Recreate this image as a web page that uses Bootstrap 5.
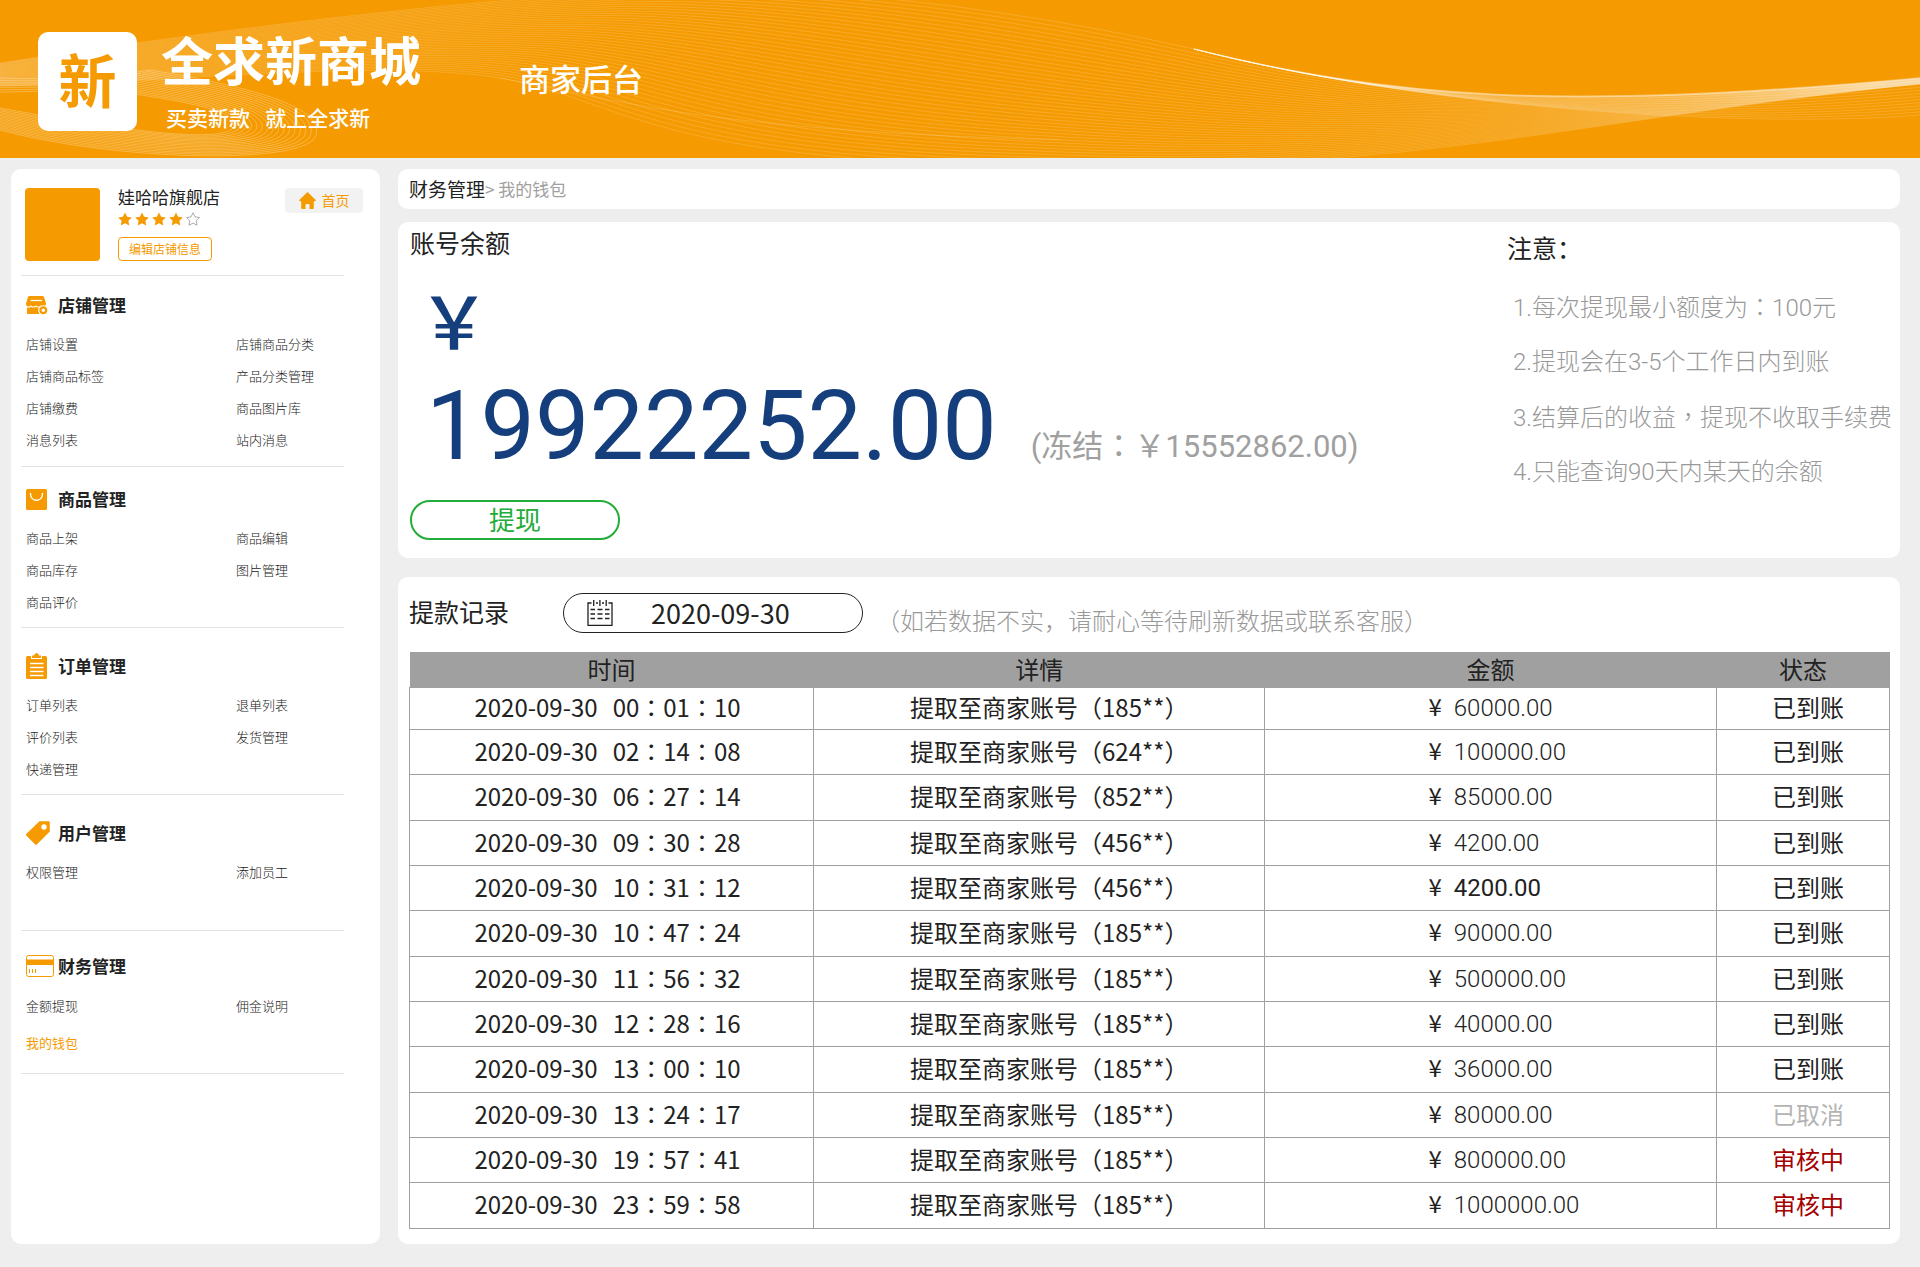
<!DOCTYPE html>
<html lang="zh-CN">
<head>
<meta charset="utf-8">
<meta name="viewport" content="width=device-width, initial-scale=1">
<title>全求新商城 商家后台</title>
<link rel="stylesheet" href="https://cdn.jsdelivr.net/npm/bootstrap@5.3.0/dist/css/bootstrap.min.css">
<style>
:root { --brand: #f59a00; --ink: #222; --soft: #a0a0a0; --navy: #153f7c; --ok: #22ac38; }
body { background: #eee; color: var(--ink); font-family: "Noto Sans CJK SC", sans-serif; }
a { color: inherit; text-decoration: none; }
.tc { font-family: "Noto Sans CJK TC", sans-serif; }
.num { font-family: Roboto, "Noto Sans CJK SC", sans-serif; }
.soft { color: var(--soft); }

.topbar { background: var(--brand); height: 158px; padding: 4px 0 0 38px; overflow: hidden; }
.waves { position: absolute; inset: 0; width: 100%; height: 100%; }
.waves path { fill: none; stroke: #fff; stroke-opacity: .16; }
.waves .loop { stroke-opacity: .28; }
.waves .glow { stroke: url(#fade); stroke-opacity: 1; stroke-width: 2; }
.logo { width: 99px; height: 99px; border-radius: 10px; font-size: 58px; line-height: 58px; color: var(--brand); padding-bottom: 6px; }
.brand-name { font-size: 52px; line-height: 72px; font-weight: 700; }
.slogan { font-size: 21px; line-height: 44px; padding-left: 5px; font-weight: 500; }
.portal { font-size: 31px; line-height: 40px; margin-left: 98px; padding-bottom: 6px; font-weight: 500; }

.page { padding: 11px 20px 23px 11px; gap: 18px; }
.panel { background: #fff; border-radius: 10px; }
.side { width: 369px; flex: none; padding-left: 10px; padding-right: 17px; }
.shop { padding: 19px 0 0 4px; height: 106px; }
.avatar { width: 75px; height: 73px; border-radius: 4px; background: var(--brand); margin-right: 18px; }
.shop-name { font-size: 17px; line-height: 18px; }
.stars { gap: 3px; margin: 6px 0 9px; }
.edit { border: 1px solid var(--brand); color: var(--brand); background: #fff; border-radius: 4px; height: 24px; width: 94px; font-size: 12px; line-height: 20px; padding: 0; }
.home { background: #f2f2f2; color: var(--brand); border-radius: 4px; width: 78px; height: 25px; font-size: 14px; gap: 6px; }
.menu { border-top: 1px solid #e2e2e2; width: 323px; padding: 25px 0 9px 5px; }
.menu-first { padding-top: 16px; padding-bottom: 10px; }
.menu-second { padding-top: 19px; }
.menu-roomy { padding-bottom: 42px; }
.menu-last { border-bottom: 1px solid #e2e2e2; padding-top: 22px; padding-bottom: 12px; }
.menu h2 { font-size: 17px; line-height: 26px; font-weight: 700; margin: 0 0 10px; }
.menu h2 span { width: 32px; height: 26px; flex: none; display: flex; align-items: center; }
.menu ul { display: grid; grid-template-columns: 210px 1fr; margin: 0; padding: 0; list-style: none; font-size: 13px; line-height: 32px; font-weight: 300; }
.menu-last ul { line-height: 37px; }
.menu-last h2 { margin-bottom: 8px; }
.current { color: var(--brand); font-weight: 400; }

.crumbs { height: 40px; padding-left: 11px; font-size: 19px; margin-bottom: 13px; }
.crumbs .soft { font-size: 17px; font-weight: 400; }
.balance { padding: 6px 0 18px 12px; margin-bottom: 19px; }
.title { font-size: 25px; line-height: 28px; font-weight: 400; margin: 0; }
.amount { color: var(--navy); }
.amount .yen { display: block; font-family: "Noto Sans CJK SC", sans-serif; font-weight: 500; font-size: 72px; line-height: 96px; padding: 14px 0 4px 8px; }
.amount .digits { display: block; font-size: 97px; line-height: 112px; padding-left: 16px; }
.frozen { font-size: 31px; line-height: 70px; margin-left: 34px; }
.cash { margin-top: 18px; width: 210px; height: 40px; border: 2px solid var(--ok); border-radius: 20px; background: #fff; color: var(--ok); font-size: 26px; line-height: 32px; padding: 0 0 2px; }
.notes { width: 393px; padding-top: 5px; flex: none; }
.notes ol { list-style: none; margin: 18px 0 0; padding-left: 6px; font-size: 24px; line-height: 54px; font-weight: 300; color: #999; white-space: nowrap; }

.records { padding: 16px 10px 15px 11px; }
.filter { margin-bottom: 19px; }
.filter .title { padding-bottom: 4px; }
.date-box { width: 300px; height: 40px; border: 1px solid var(--ink); border-radius: 20px; margin-left: 54px; padding-left: 23px; gap: 38px; }
.date-box input { border: 0; outline: 0; padding: 0; width: 180px; font-size: 27px; line-height: 36px; background: none; color: var(--ink); }
.hint { font-size: 24px; line-height: 24px; font-weight: 300; margin-left: 13px; padding-top: 14px; color: #999; }
.log { width: 100%; table-layout: fixed; border-collapse: collapse; font-size: 24px; line-height: 34px; text-align: center; }
.log th { background: #a0a0a0; height: 35px; padding: 0; font-weight: 400; }
.log td { border: 1px solid #a0a0a0; height: 45px; padding: 0 0 2px; }
.log tbody tr:first-child td { height: 42px; }
.log tbody tr:nth-child(3n) td { height: 46px; }
.c-time { width: 27.3%; } .c-info { width: 30.5%; } .c-sum { width: 30.5%; }
.log td:nth-child(1) { padding-right: 8px; }
.log td:nth-child(2) { padding-left: 20px; }
.log td:nth-child(3) { padding-left: 163px; text-align: left; }
.log td:nth-child(4) { padding-left: 10px; }
.clock { margin-left: 15px; }
.log .num { margin-left: 12px; font-weight: 300; }
.log .strong { font-weight: 400; }
.log .void { color: #b4b4b4; }
.log .wait { color: #a40000; }
</style>
</head>
<body>
<header class="topbar position-relative d-flex align-items-center text-white">
  <svg class="waves" id="waves" viewBox="0 0 1920 158" preserveAspectRatio="none" aria-hidden="true">
    <defs>
      <linearGradient id="fade" gradientUnits="userSpaceOnUse" x1="1194" x2="1920" y1="0" y2="0">
        <stop offset="0" stop-color="#fff" stop-opacity="0"/><stop offset=".2" stop-color="#fff" stop-opacity=".4"/><stop offset=".8" stop-color="#fff" stop-opacity=".4"/><stop offset="1" stop-color="#fff" stop-opacity=".2"/>
      </linearGradient>
    </defs>
  </svg>
  <div class="logo position-relative bg-white fw-bold d-flex align-items-center justify-content-center">新</div>
  <div class="position-relative ms-4">
    <div class="brand-name">全求新商城</div>
    <div class="slogan">买卖新款&ensp; 就上全求新</div>
  </div>
  <div class="portal position-relative">商家后台</div>
</header>

<div class="page d-flex">
  <aside class="side panel">
    <div class="shop d-flex align-items-start">
      <div class="avatar"></div>
      <div>
        <div class="shop-name">娃哈哈旗舰店</div>
        <div class="stars d-flex" role="img" aria-label="4 / 5">
          <svg width="14" height="14" viewBox="0 0 14 14"><path fill="#f59a00" d="M7 .4l2.1 4.3 4.7.7-3.4 3.3.8 4.7L7 11.200l-4.200 2.200.8-4.700L.2 5.400l4.700-.7z"/></svg>
          <svg width="14" height="14" viewBox="0 0 14 14"><path fill="#f59a00" d="M7 .4l2.1 4.3 4.7.7-3.4 3.3.8 4.7L7 11.200l-4.200 2.200.8-4.700L.2 5.400l4.700-.7z"/></svg>
          <svg width="14" height="14" viewBox="0 0 14 14"><path fill="#f59a00" d="M7 .4l2.1 4.3 4.7.7-3.4 3.3.8 4.7L7 11.200l-4.200 2.200.8-4.700L.2 5.400l4.700-.7z"/></svg>
          <svg width="14" height="14" viewBox="0 0 14 14"><path fill="#f59a00" d="M7 .4l2.1 4.3 4.7.7-3.4 3.3.8 4.7L7 11.200l-4.200 2.200.8-4.700L.2 5.400l4.700-.7z"/></svg>
          <svg width="14" height="14" viewBox="0 0 14 14"><path fill="none" stroke="#888" stroke-width=".7" d="M7 .8l2 4.100 4.500.6-3.300 3.200.8 4.500-4-2.100-4 2.100.8-4.500L.5 5.500 5 4.900z"/></svg>
        </div>
        <button type="button" class="edit">编辑店铺信息</button>
      </div>
      <a href="#" class="home d-flex align-items-center justify-content-center ms-auto">
        <svg width="17" height="17" viewBox="0 0 17 17"><path fill="#f59a00" d="M8.500 0L17 8.200l-.8 1h-1.400V16q0 1-1 1h-3.300v-4q0-1-1-1h-2q-1 0-1 1v4H3.200q-1 0-1-1V9.200H.8l-.8-1z"/></svg>首页</a>
    </div>

    <nav class="menu menu-first">
      <h2 class="d-flex"><span><svg width="22" height="19" viewBox="0 0 22 19"><path fill="#f59a00" d="M3.500 0h13q1 0 1.500 1l2 6.500q.3 2.500-2 3-2 .2-3-1.200-1.300 1.700-3.200 1.200-1.200-.2-1.800-1.200-1.400 1.700-3.200 1.200-1.300-.3-1.800-1.200Q3.500 11 1.800 10.500-.2 9.800 0 7.500L2 1q.5-1 1.500-1z"/><path stroke="#fff" stroke-width="1.300" d="M4.500 4.500h11.500"/><path fill="#f59a00" d="M1 11.500q3 .6 4-.8 2.500 1.700 5 0 1.500 1 3 .9-1.500 3.400.5 6.400H1z"/><circle cx="17.300" cy="14.200" r="4.500" fill="#f59a00" stroke="#fff"/><circle cx="17.300" cy="14.200" r="1.700" fill="#fff"/></svg></span>店铺管理</h2>
      <ul>
        <li><a href="#">店铺设置</a></li><li><a href="#">店铺商品分类</a></li>
        <li><a href="#">店铺商品标签</a></li><li><a href="#">产品分类管理</a></li>
        <li><a href="#">店铺缴费</a></li><li><a href="#">商品图片库</a></li>
        <li><a href="#">消息列表</a></li><li><a href="#">站内消息</a></li>
      </ul>
    </nav>
    <nav class="menu menu-second">
      <h2 class="d-flex"><span><svg width="21" height="21" viewBox="0 0 21 21"><rect width="21" height="21" rx="1.500" fill="#f59a00"/><path fill="none" stroke="#fff" stroke-width="1.400" stroke-linecap="round" d="M4.500 4.500c0 9 12 9 12 0"/></svg></span>商品管理</h2>
      <ul>
        <li><a href="#">商品上架</a></li><li><a href="#">商品编辑</a></li>
        <li><a href="#">商品库存</a></li><li><a href="#">图片管理</a></li>
        <li><a href="#">商品评价</a></li>
      </ul>
    </nav>
    <nav class="menu">
      <h2 class="d-flex"><span><svg width="21" height="26" viewBox="0 0 21 26"><path fill="#f59a00" d="M1.500 3H5v3h11V3h3.500Q21 3 21 4.500v20q0 1.500-1.500 1.500h-18Q0 26 0 24.500v-20Q0 3 1.500 3z"/><path fill="#f59a00" d="M6 5V2.500h2Q8.500 0 10.500 0T13 2.500h2V5z"/><path stroke="#fff" stroke-width="1.300" d="M4 10.500h13.500M4 14.500h13.500M4 18.500h13.500M4 22.500h13.500"/></svg></span>订单管理</h2>
      <ul>
        <li><a href="#">订单列表</a></li><li><a href="#">退单列表</a></li>
        <li><a href="#">评价列表</a></li><li><a href="#">发货管理</a></li>
        <li><a href="#">快递管理</a></li>
      </ul>
    </nav>
    <nav class="menu menu-roomy">
      <h2 class="d-flex"><span><svg width="24" height="24" viewBox="0 0 24 24"><path fill="#f59a00" d="M13.500.3h9q1.300 0 1.300 1.300v9L11 23.200q-1 1-2 0L.5 14.700q-1-1 0-2z"/><circle cx="18" cy="6" r="2.700" fill="#fff"/></svg></span>用户管理</h2>
      <ul>
        <li><a href="#">权限管理</a></li><li><a href="#">添加员工</a></li>
      </ul>
    </nav>
    <nav class="menu menu-last">
      <h2 class="d-flex"><span><svg width="28" height="22" viewBox="0 0 28 22"><rect x=".5" y=".5" width="27" height="21" rx="2" fill="#fff" stroke="#f59a00"/><path fill="#f59a00" d="M0 4.500h28v5.500H0z"/><path stroke="#f59a00" d="M3.500 14v4M6.500 14v4M9.500 14v4"/></svg></span>财务管理</h2>
      <ul>
        <li><a href="#">金额提现</a></li><li><a href="#">佣金说明</a></li>
        <li><a href="#" class="current" aria-current="page">我的钱包</a></li>
      </ul>
    </nav>
  </aside>

  <main class="flex-grow-1">
    <nav class="crumbs panel d-flex align-items-center" aria-label="breadcrumb">
      <a href="#">财务管理</a><span class="soft">&gt; 我的钱包</span>
    </nav>

    <section class="balance panel d-flex">
      <div class="flex-grow-1">
        <h1 class="title">账号余额</h1>
        <div class="d-flex align-items-end">
          <div class="amount num"><span class="yen">￥</span><span class="digits">19922252.00</span></div>
          <div class="frozen soft num">(冻结<span class="tc" lang="zh-TW">：</span>￥15552862.00)</div>
        </div>
        <button type="button" class="cash d-block">提现</button>
      </div>
      <div class="notes">
        <h2 class="title">注意：</h2>
        <ol class="num">
          <li>1.每次提现最小额度为<span class="tc" lang="zh-TW">：</span>100元</li>
          <li>2.提现会在3-5个工作日内到账</li>
          <li>3.结算后的收益<span class="tc" lang="zh-TW">，</span>提现不收取手续费</li>
          <li>4.只能查询90天内某天的余额</li>
        </ol>
      </div>
    </section>

    <section class="records panel">
      <div class="filter d-flex align-items-center">
        <label class="title" for="day">提款记录</label>
        <div class="date-box d-flex align-items-center">
          <svg width="26" height="26" viewBox="0 0 26 26" fill="none" stroke="#222" stroke-width="1.300"><path d="M4.500 3H1v22.300h24V3h-3.500M9 3h2M15 3h2M6.700 0v6M12.900 0v6M19.200 0v6"/><path stroke-width="1.500" d="M3.500 9.500H8M10.500 9.500H15.500M18 9.500h4.500M3.500 14H8M10.500 14H15.500M18 14h4.500M3.500 18.500H8M10.500 18.500H15.500M18 18.500h4.500"/></svg>
          <input id="day" type="text" value="2020-09-30">
        </div>
        <div class="hint">（如若数据不实，请耐心等待刷新数据或联系客服）</div>
      </div>
      <table class="log">
        <thead><tr><th class="c-time">时间</th><th class="c-info">详情</th><th class="c-sum">金额</th><th>状态</th></tr></thead>
        <tbody>
          <tr><td class="tc">2020-09-30<span class="clock">00：01：10</span></td><td>提取至商家账号（185**）</td><td>¥<span class="num">60000.00</span></td><td>已到账</td></tr>
          <tr><td class="tc">2020-09-30<span class="clock">02：14：08</span></td><td>提取至商家账号（624**）</td><td>¥<span class="num">100000.00</span></td><td>已到账</td></tr>
          <tr><td class="tc">2020-09-30<span class="clock">06：27：14</span></td><td>提取至商家账号（852**）</td><td>¥<span class="num">85000.00</span></td><td>已到账</td></tr>
          <tr><td class="tc">2020-09-30<span class="clock">09：30：28</span></td><td>提取至商家账号（456**）</td><td>¥<span class="num">4200.00</span></td><td>已到账</td></tr>
          <tr><td class="tc">2020-09-30<span class="clock">10：31：12</span></td><td>提取至商家账号（456**）</td><td>¥<span class="num strong">4200.00</span></td><td>已到账</td></tr>
          <tr><td class="tc">2020-09-30<span class="clock">10：47：24</span></td><td>提取至商家账号（185**）</td><td>¥<span class="num">90000.00</span></td><td>已到账</td></tr>
          <tr><td class="tc">2020-09-30<span class="clock">11：56：32</span></td><td>提取至商家账号（185**）</td><td>¥<span class="num">500000.00</span></td><td>已到账</td></tr>
          <tr><td class="tc">2020-09-30<span class="clock">12：28：16</span></td><td>提取至商家账号（185**）</td><td>¥<span class="num">40000.00</span></td><td>已到账</td></tr>
          <tr><td class="tc">2020-09-30<span class="clock">13：00：10</span></td><td>提取至商家账号（185**）</td><td>¥<span class="num">36000.00</span></td><td>已到账</td></tr>
          <tr><td class="tc">2020-09-30<span class="clock">13：24：17</span></td><td>提取至商家账号（185**）</td><td>¥<span class="num">80000.00</span></td><td class="void">已取消</td></tr>
          <tr><td class="tc">2020-09-30<span class="clock">19：57：41</span></td><td>提取至商家账号（185**）</td><td>¥<span class="num">800000.00</span></td><td class="wait">审核中</td></tr>
          <tr><td class="tc">2020-09-30<span class="clock">23：59：58</span></td><td>提取至商家账号（185**）</td><td>¥<span class="num">1000000.00</span></td><td class="wait">审核中</td></tr>
        </tbody>
      </table>
    </section>
  </main>
</div>
<script src="https://cdn.jsdelivr.net/npm/bootstrap@5.3.0/dist/js/bootstrap.bundle.min.js"></script>
<script>
// Each ribbon is a set of thin lines blended between two edge curves.
const svg = document.getElementById('waves');
function line(p, cls) {
  const el = document.createElementNS('http://www.w3.org/2000/svg', 'path');
  let d = 'M' + p[0] + ',' + p[1];
  for (let i = 2; i < p.length; i += 6) d += 'C' + p.slice(i, i + 6).join(' ');
  el.setAttribute('d', d);
  if (cls) el.setAttribute('class', cls);
  svg.appendChild(el);
}
function ribbon(a, b, n, cls) {
  for (let k = 0; k <= n; k++) line(a.map((v, i) => (v + (b[i] - v) * k / n).toFixed(1)), cls);
}
const crest = [0,63, 150,40, 400,5, 620,-8, 780,-20, 1000,5, 1194,49, 1390,98, 1560,112, 1920,78];
const trough = [0,86, 150,84, 380,58, 500,78, 620,100, 650,158, 1000,165, 1400,178, 1570,120, 1920,84];
ribbon(crest, trough, 40);
line([500,78, 620,100, 700,130, 1060,140], '');
ribbon([1194,49, 1390,98, 1560,112, 1920,78], [1194,49, 1440,112, 1760,128, 1920,115], 12);
ribbon([150,70, 240,85, 325,105, 316,135, 310,165, 120,162, 0,130], [95,88, 160,98, 240,108, 235,126, 225,146, 110,128, 0,108], 15, 'loop');
ribbon([0,78, 50,80, 100,78, 150,70], [0,92, 50,92, 80,88, 95,88], 6, 'loop');
line(crest.slice(12), 'glow');
</script>
</body>
</html>
